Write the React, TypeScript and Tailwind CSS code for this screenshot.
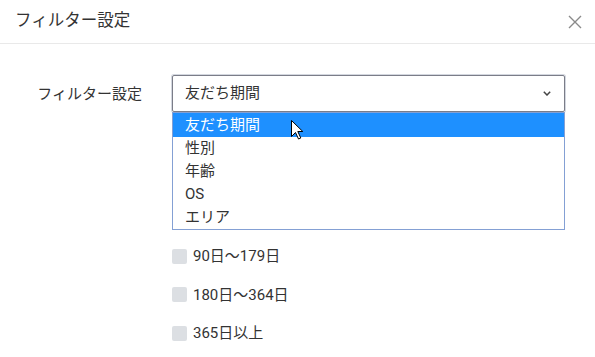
const OPTIONS = ["友だち期間", "性別", "年齢", "OS", "エリア"];
const CHECKS = ["90日〜179日", "180日〜364日", "365日以上"];

function Cursor() {
  return (
    <svg className="pointer-events-none absolute left-[291px] top-[120px] z-30" width="13" height="20" viewBox="0 0 13 20">
      <path d="M0.5 0.5 L0.5 16.5 L4.5 12.5 L7.5 19 L9.8 18 L6.8 11.5 L11.8 11.5 Z" fill="#fff" stroke="#000" strokeWidth="1" strokeLinejoin="miter" />
    </svg>
  );
}

export default function App() {
  return (
    <div className="relative h-[357px] w-[595px] overflow-hidden bg-white text-[#333] [font-family:Roboto,'Noto_Sans_CJK_JP',sans-serif]">
      {/* header */}
      <div className="flex h-[44px] items-center justify-between border-b border-[#e9e9e9] pl-[15px] pr-[13px]">
        <h1 className="text-[16.5px] leading-none">フィルター設定</h1>
        <svg width="14" height="14" viewBox="0 0 14 14" className="text-[#8a8a8a]">
          <path d="M1 1 L13 13 M13 1 L1 13" stroke="currentColor" strokeWidth="1.4" />
        </svg>
      </div>

      {/* body */}
      <div className="flex pt-[31px]">
        <div className="w-[142px] shrink-0 pt-[8px] text-right text-[15px] leading-[22px]">フィルター設定</div>
        <div className="ml-[30px] w-[393px]">
          <div className="relative">
            <div className="flex h-[37px] items-center justify-between rounded-[2px] border border-[#7b7d88] pl-[12px] pr-[13px] text-[15px] shadow-[0_0_0_1px_#d3d7df]">
              <span>友だち期間</span>
              <svg width="8" height="5" viewBox="0 0 8 5">
                <path d="M0.8 0.8 L4 4 L7.2 0.8" fill="none" stroke="#444" strokeWidth="1.5" />
              </svg>
            </div>
            <ul className="absolute left-0 top-[37px] z-20 w-full border border-[#84a0d4] bg-white text-[15px]">
              {OPTIONS.map((o, i) => (
                <li
                  key={o}
                  className={`flex items-center pl-[12px] leading-none ${i === 0 ? "h-[24px] bg-[#1e90ff] text-white" : "h-[23px]"}`}
                >
                  {o}
                </li>
              ))}
            </ul>
          </div>

          <div className="mt-[125px] flex flex-col">
            {CHECKS.map((c) => (
              <label key={c} className="flex h-[38.5px] items-center gap-[6px] text-[15px]">
                <span className="h-[15px] w-[15px] shrink-0 rounded-[2px] bg-[#dcdfe3]" />
                <span>{c}</span>
              </label>
            ))}
          </div>
        </div>
      </div>

      <Cursor />
    </div>
  );
}
